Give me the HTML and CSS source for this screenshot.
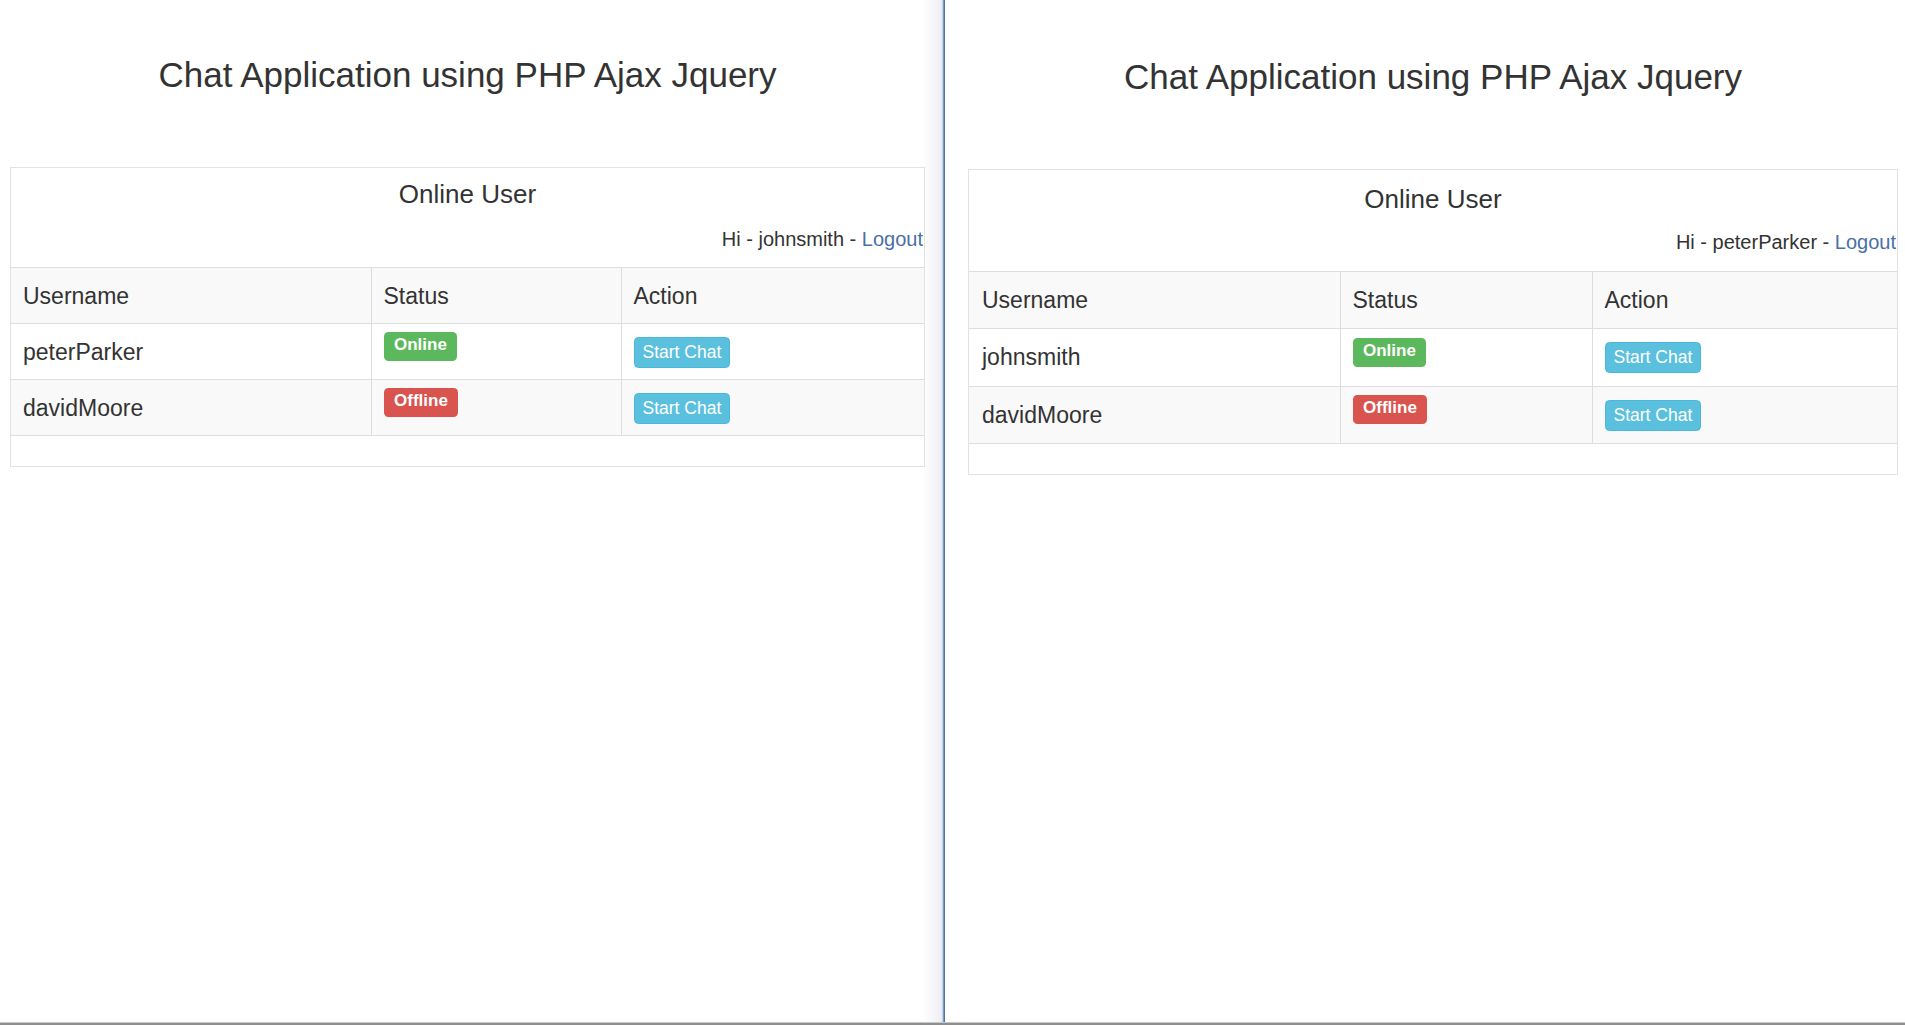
FILE: index.html
```html
<!DOCTYPE html>
<html lang="en">
<head>
<meta charset="utf-8">
<title>Chat Application using PHP Ajax Jquery</title>
<link rel="stylesheet" href="styles.css">
</head>
<body>
<div class="screen">
  <div class="windows">
    <section class="pane pane-left">
      <div class="app app-left">
        <h3 class="app-title">Chat Application using PHP Ajax Jquery</h3>
        <div class="panel">
          <h4 class="panel-heading">Online User</h4>
          <p class="greeting">Hi - johnsmith - <a href="#" class="logout">Logout</a></p>
          <table class="users">
            <colgroup><col class="col-user"><col class="col-status"><col class="col-action"></colgroup>
            <tr class="row-shade">
              <th class="c-text">Username</th><th class="c-text">Status</th><th class="c-text">Action</th>
            </tr>
            <tr>
              <td class="c-text">peterParker</td>
              <td class="c-status"><span class="label label-online">Online</span></td>
              <td class="c-action"><button class="btn-chat" type="button">Start Chat</button></td>
            </tr>
            <tr class="row-shade">
              <td class="c-text">davidMoore</td>
              <td class="c-status"><span class="label label-offline">Offline</span></td>
              <td class="c-action"><button class="btn-chat" type="button">Start Chat</button></td>
            </tr>
          </table>
        </div>
      </div>
    </section>
    <div class="divider"></div>
    <section class="pane pane-right">
      <div class="app app-right">
        <h3 class="app-title">Chat Application using PHP Ajax Jquery</h3>
        <div class="panel">
          <h4 class="panel-heading">Online User</h4>
          <p class="greeting">Hi - peterParker - <a href="#" class="logout">Logout</a></p>
          <table class="users">
            <colgroup><col class="col-user"><col class="col-status"><col class="col-action"></colgroup>
            <tr class="row-shade">
              <th class="c-text">Username</th><th class="c-text">Status</th><th class="c-text">Action</th>
            </tr>
            <tr>
              <td class="c-text">johnsmith</td>
              <td class="c-status"><span class="label label-online">Online</span></td>
              <td class="c-action"><button class="btn-chat" type="button">Start Chat</button></td>
            </tr>
            <tr class="row-shade">
              <td class="c-text">davidMoore</td>
              <td class="c-status"><span class="label label-offline">Offline</span></td>
              <td class="c-action"><button class="btn-chat" type="button">Start Chat</button></td>
            </tr>
          </table>
        </div>
      </div>
    </section>
  </div>
  <div class="bottom-edge"></div>
</div>
</body>
</html>
```

FILE: styles.css
```css
* { box-sizing: border-box; }

html, body {
  margin: 0;
  padding: 0;
  height: 100%;
}

body {
  font-family: "Liberation Sans", Arial, Helvetica, sans-serif;
  color: #333;
  background: #fff;
  overflow: hidden;
}

.screen {
  height: 100vh;
  display: flex;
  flex-direction: column;
}

.windows {
  flex: 1;
  display: flex;
  min-height: 0;
}

.pane-left {
  width: 941px;
  padding-left: 10px;
  background: linear-gradient(to left, #f1eef2 0, #ffffff 18px);
}

.divider {
  width: 4px;
  background: linear-gradient(to right,
    #e3ebf5 0, #e3ebf5 1px,
    #c2d5ec 1px, #c2d5ec 2px,
    #7d9cc4 2px, #7d9cc4 3px,
    #4f73a2 3px, #4f73a2 4px);
}

.pane-right {
  flex: 1;
  padding-left: 23px;
  background: #fff;
}

.app-left { width: 915px; }
.app-right { width: 930px; }

.app-title {
  margin: 0;
  font-weight: normal;
  font-size: 35px;
  line-height: 40px;
  text-align: center;
  color: #333;
}

.app-left .app-title { padding-top: 54.5px; margin-bottom: 72.5px; }
.app-right .app-title { padding-top: 57px; margin-bottom: 72px; }

.panel {
  border: 1px solid #e2e2e2;
  padding-bottom: 30px;
  background: #fff;
}

.panel-heading {
  margin: 0;
  font-weight: normal;
  font-size: 26px;
  line-height: 36px;
  text-align: center;
  color: #333;
}

.app-left .panel-heading { padding-top: 8px; }
.app-right .panel-heading { padding-top: 10.8px; }

.greeting {
  margin: 0;
  font-size: 20px;
  line-height: 30px;
  text-align: right;
  padding-right: 1px;
  color: #333;
}

.app-left .greeting { margin-top: 11.7px; margin-bottom: 13px; }
.app-right .greeting { margin-top: 10.2px; margin-bottom: 14px; }

.logout {
  color: #4a6fa5;
  text-decoration: none;
}

.users {
  width: 100%;
  border-collapse: collapse;
  table-layout: fixed;
  font-size: 23px;
}

.app-left .col-user { width: 360px; }
.app-left .col-status { width: 250px; }
.app-right .col-user { width: 371px; }
.app-right .col-status { width: 252px; }

.users th,
.users td {
  border: 1px solid #dddddd;
  padding: 0 12px;
  vertical-align: top;
  text-align: left;
  font-weight: normal;
  white-space: nowrap;
}

.app-left .users th,
.app-left .users td { height: 56px; }
.app-right .users th,
.app-right .users td { height: 57.5px; }

.app-right .users th:first-child,
.app-right .users td:first-child { padding-left: 13px; }

.users tr > :first-child { border-left: none; }
.users tr > :last-child { border-right: none; }

.row-shade { background: #f9f9f9; }

.users .c-text {
  padding-top: 13px;
  line-height: 30px;
}

.label {
  display: block;
  width: max-content;
  margin-top: 8px;
  padding: 0 10.5px 3px;
  font-size: 17px;
  font-weight: bold;
  line-height: 26px;
  color: #fff;
  border-radius: 4.5px;
}

.app-right tr:nth-child(2) .label { margin-top: 8.5px; }

.label-online { background: #5cb85c; }
.label-offline { background: #d9534f; }

.btn-chat {
  display: block;
  width: max-content;
  margin: 13px 0 0;
  padding: 0 8px 1px;
  font-family: "Liberation Sans", Arial, Helvetica, sans-serif;
  font-size: 17.5px;
  line-height: 28px;
  color: #fff;
  background: #5bc0de;
  border: 1px solid #46b8da;
  border-radius: 4.5px;
}

.bottom-edge {
  height: 3px;
  background: linear-gradient(to bottom, #c9c9c9 0, #c9c9c9 1px, #8e8e8e 1px);
}
```
